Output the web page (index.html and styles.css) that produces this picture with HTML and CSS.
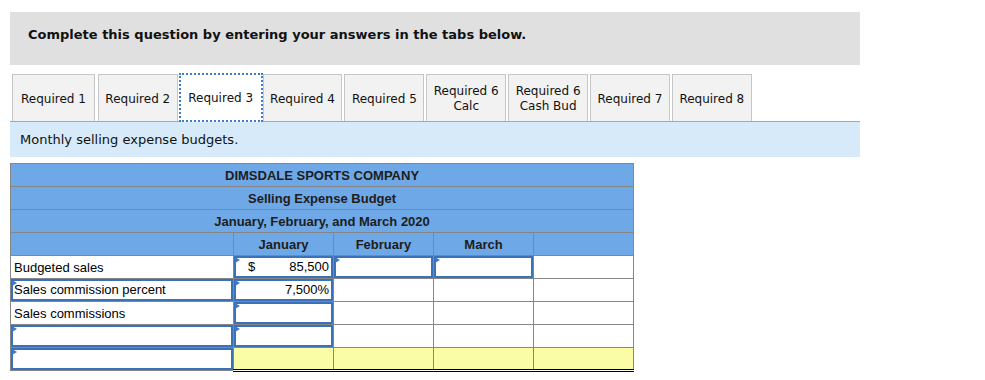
FILE: index.html
```html
<html>
    <head>
        <link rel="stylesheet" href="styles.css">
        <title>Selling Expense Budget</title>
    </head>
    <body>

<div class="page"> <!-- outer wrapper -->
    <div class="prompt">Complete this question by entering your answers in the tabs below.</div>

    <div class="tabs">
        <div class="tab">Required 1</div>
        <div class="tab">Required 2</div>
        <div class="tab active">Required 3</div>
        <div class="tab">Required 4</div>
        <div class="tab">Required 5</div>
        <div class="tab">Required 6<br>Calc</div>
        <div class="tab">Required 6<br>Cash Bud</div>
        <div class="tab">Required 7</div>
        <div class="tab">Required 8</div>
    </div>

    <div class="instruction">Monthly selling expense budgets.</div>

    <table class="budget">
        <colgroup>
            <col class="col-label">
            <col class="col-month">
            <col class="col-month">
            <col class="col-month">
            <col class="col-month">
        </colgroup>
        <tr class="head"><td colspan="5">DIMSDALE SPORTS COMPANY</td></tr>
        <tr class="head"><td colspan="5">Selling Expense Budget</td></tr>
        <tr class="head"><td colspan="5">January, February, and March 2020</td></tr>
        <tr class="head months">
            <td></td>
            <td>January</td>
            <td>February</td>
            <td>March</td>
            <td></td>
        </tr>
        <tr>
            <td class="text">Budgeted sales</td>
            <td><div class="entry money"><span>$</span><span>85,500</span></div></td>
            <td><div class="entry"></div></td>
            <td><div class="entry"></div></td>
            <td></td>
        </tr>
        <tr>
            <td><div class="entry left">Sales commission percent</div></td>
            <td><div class="entry right">7,500%</div></td>
            <td></td>
            <td></td>
            <td></td>
        </tr>
        <tr class="ruled">
            <td class="text">Sales commissions</td>
            <td><div class="entry"></div></td>
            <td></td>
            <td></td>
            <td></td>
        </tr>
        <tr>
            <td><div class="entry"></div></td>
            <td><div class="entry"></div></td>
            <td></td>
            <td></td>
            <td></td>
        </tr>
        <tr class="total">
            <td><div class="entry"></div></td>
            <td></td>
            <td></td>
            <td></td>
            <td></td>
        </tr>
    </table>
</div>
    </body>
</html>
```

FILE: styles.css
```css
* {
    box-sizing: border-box;
}

body {
    margin: 8px;
    font-family: 'DejaVu Sans', Verdana, sans-serif;
    color: #111;
}

.page {
    margin: 4px 0 0 2px;
}

/* grey question banner */
.prompt {
    width: 850px;
    height: 53px;
    padding: 15px 18px 0;
    background: #e0e0e0;
    font-size: 13px;
    font-weight: bold;
    line-height: 16px;
}

/* tab strip */
.tabs {
    display: flex;
    width: 850px;
    margin-top: 8px;
    padding-left: 2px;
    border-bottom: 1px solid #a8a8a8;
    align-items: flex-end;
}

.tab {
    display: flex;
    align-items: center;
    justify-content: center;
    height: 47px;
    padding: 2px 6.5px 0;
    margin-right: 2px;
    background: #f2f2f2;
    border: 1px solid #c6c6c6;
    border-bottom: none;
    font-size: 12px;
    line-height: 15px;
    text-align: center;
    white-space: nowrap;
}

.tab:first-child { padding: 2px 8px 0; margin-right: 3px; }

.tab.active {
    height: 49px;
    margin: 0 0 -1px -1px;
    padding: 2px 7.5px 0;
    background: #fff;
    border: 2px dotted #3f7ccc;
}

.instruction {
    display: flex;
    align-items: center;
    width: 850px;
    height: 35px;
    padding-left: 10px;
    background: #d6eaf9;
    font-size: 13px;
}

/* budget table */
.budget {
    margin-top: 6px;
    border-collapse: collapse;
    table-layout: fixed;
    width: 623px;
    font-family: 'Liberation Sans', Arial, sans-serif;
    font-size: 13px;
    color: #000;
}

.col-label { width: 223px; }
.col-month { width: 100px; }

.budget td {
    height: 23px;
    padding: 0;
    border: 1px solid #868686;
    white-space: nowrap;
    overflow: hidden;
}

.head td {
    background: #6fa8e6;
    color: #1d1d1d;
    font-weight: bold;
    text-align: center;
}

.budget td.text { padding-left: 3px; }

.ruled td + td { border-top: 1px solid #000; }

.total td + td {
    background: #fbfca6;
    border-top: 1px solid #000;
    border-bottom: 3px double #000;
}

/* editable cells */
.entry {
    position: relative;
    height: 22px;
    border: 2px solid #3b71b8;
    padding: 0 2px;
    line-height: 18px;
}

.entry::before {
    content: "";
    position: absolute;
    top: -1px;
    left: -1px;
    border-top: 3px solid transparent;
    border-bottom: 3px solid transparent;
    border-left: 5px solid #3b78d0;
}

.entry.right { text-align: right; }

.entry.left { padding-left: 1px; }

.entry.money {
    display: flex;
    justify-content: space-between;
    padding-left: 12px;
}
```
